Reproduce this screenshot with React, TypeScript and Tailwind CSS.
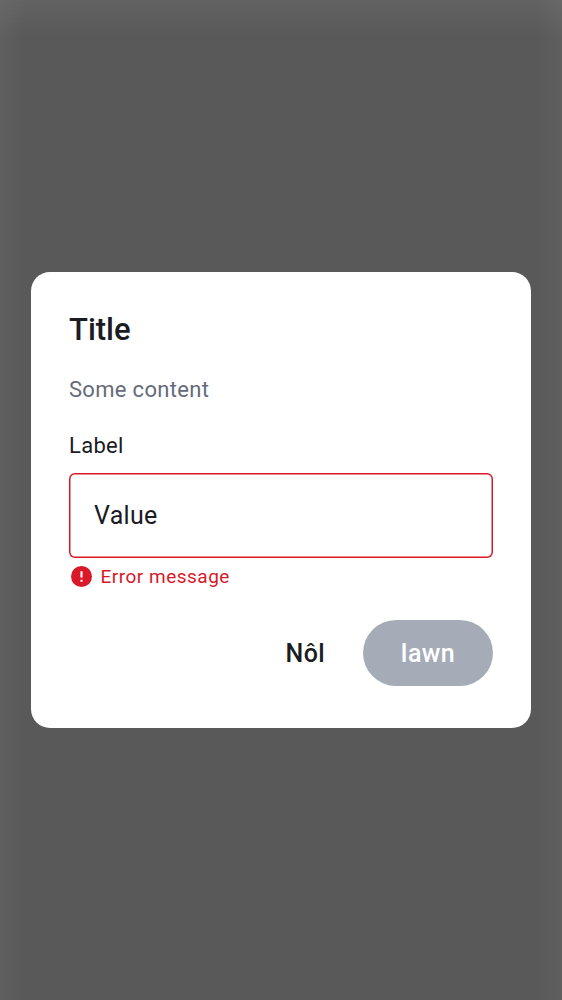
export default function App() {
  return (
    <div className="flex h-[1000px] w-[562px] items-center justify-center bg-[#595959] bg-[linear-gradient(to_bottom,rgba(255,255,255,0.055),transparent_38px),linear-gradient(to_right,rgba(255,255,255,0.04),transparent_26px,transparent_536px,rgba(255,255,255,0.04))] font-['Roboto',sans-serif]">
      <div className="flex h-[456px] w-[500px] flex-col rounded-[19px] bg-white px-[38px]">
        <h1 className="mt-[38px] h-10 text-[31px] leading-10 font-medium text-[#1a1b23]">Title</h1>
        <p className="mt-[25px] h-[30px] text-[22px] leading-[30px] tracking-[0.31px] text-[#656b79]">Some content</p>
        <label className="mt-[26px] h-[30px] text-[22px] leading-[30px] tracking-[0.31px] text-[#1a1b23]">Label</label>
        <div className="mt-[12px] flex h-[85px] items-center rounded-[6px] px-[25px] text-[25px] tracking-[0.3px] text-[#1a1b23] shadow-[inset_0_0_0_1.5px_#d9182a]">Value</div>
        <div className="mt-[6px] flex h-[26px] items-center text-[#d9182a]">
          <svg className="mb-px ml-[2px] size-[21px]" viewBox="0 0 20 20">
            <circle cx="10" cy="10" r="10" fill="currentColor" />
            <path d="M10 5v6M10 13v2" stroke="white" strokeWidth="2" />
          </svg>
          <span className="ml-[8.5px] text-[19px] tracking-[0.5px]">Error message</span>
        </div>
        <div className="mt-[30px] flex h-[66px] justify-end text-[25px] font-medium tracking-[0.4px]">
          <button className="pr-[37.5px] pt-px text-[#1a1b23]">Nôl</button>
          <button className="w-[130.5px] rounded-full bg-[#a5acb7] pt-px text-white">Iawn</button>
        </div>
      </div>
    </div>
  );
}
